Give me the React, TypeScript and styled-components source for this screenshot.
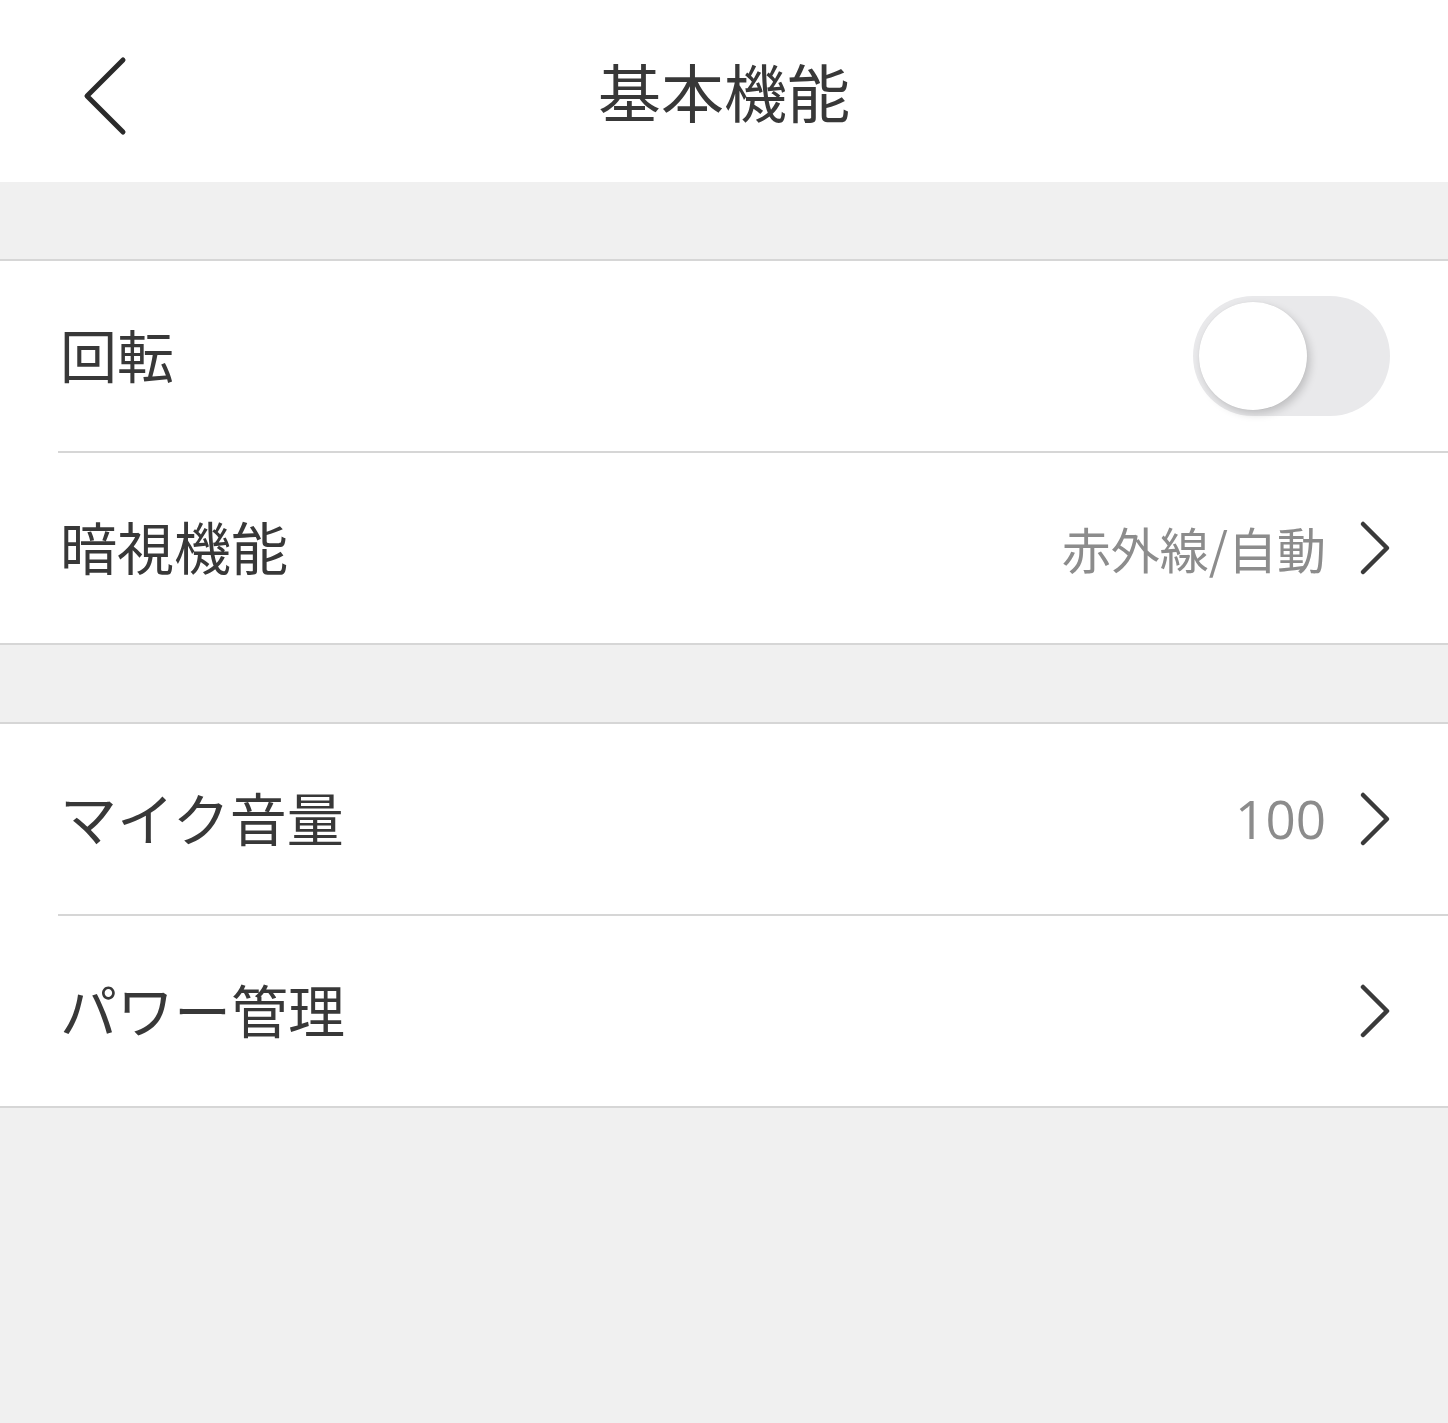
import React, { useState } from 'react';
import styled, { createGlobalStyle } from 'styled-components';

const GlobalStyle = createGlobalStyle`
  html, body {
    margin: 0;
    padding: 0;
    background: #f0f0f0;
  }
  body {
    font-family: "Noto Sans CJK JP", "Noto Sans", sans-serif;
    color: #333;
  }
`

const Page = styled.div`
  width: 1448px;
  min-height: 1423px;
  background: #f0f0f0;
`

const Header = styled.header`
  height: 182px;
  background: #fff;
  display: flex;
  align-items: center;
  justify-content: center;
  position: relative;
`

const BackButton = styled.button`
  position: absolute;
  left: 70px;
  top: 50px;
  width: 72px;
  height: 92px;
  border: none;
  background: none;
  padding: 0;
  display: flex;
  align-items: center;
  justify-content: center;
`

const Title = styled.h1`
  margin: 0 0 4px;
  font-size: 63px;
  font-weight: 400;
  color: #383838;
`

const Spacer = styled.div`
  height: 77px;
  border-bottom: 2px solid #d6d6d6;
`

const Group = styled.div`
  background: #fff;
  border-bottom: 2px solid #d6d6d6;
`

const Row = styled.div<{ $divider?: boolean }>`
  height: 190px;
  display: flex;
  align-items: center;
  padding: 0 56px 0 60px;
  position: relative;
  &::after {
    content: '';
    display: ${p => (p.$divider ? 'block' : 'none')};
    position: absolute;
    left: 58px;
    right: 0;
    bottom: -2px;
    height: 2px;
    background: #d6d6d6;
    z-index: 1;
  }
  & + & {
    margin-top: 2px;
  }
`

const Label = styled.span`
  flex: 1;
  font-size: 57px;
  color: #383838;
  padding-bottom: 6px;
`

const Value = styled.span`
  font-size: 49px;
  color: #8c8c8c;
  margin-right: 30px;
  padding-bottom: 2px;
`

const NumberValue = styled(Value)`
  font-family: "Open Sans", "Noto Sans", sans-serif;
  font-size: 53px;
`

const Track = styled.button<{ $on: boolean }>`
  width: 197px;
  height: 120px;
  margin-right: 2px;
  border-radius: 60px;
  border: none;
  padding: 0;
  background: ${p => (p.$on ? '#4cd964' : '#e9e9eb')};
  position: relative;
  cursor: pointer;
`

const Knob = styled.span<{ $on: boolean }>`
  position: absolute;
  top: 6px;
  left: ${p => (p.$on ? '83px' : '6px')};
  width: 108px;
  height: 108px;
  border-radius: 50%;
  background: #fff;
  box-shadow: 3px 4px 8px rgba(0, 0, 0, 0.18), 0 0 1px rgba(0, 0, 0, 0.1);
`

const Chevron = () => (
  <svg width="36" height="56" viewBox="0 0 36 56">
    <path d="M7 4 L31 28 L7 52" fill="none" stroke="#3a3a3a" strokeWidth="4.5" strokeLinecap="round" strokeLinejoin="round" />
  </svg>
)

const BackIcon = () => (
  <svg width="50" height="82" viewBox="0 0 50 82">
    <path d="M42 5 L6 41 L42 77" fill="none" stroke="#2a2a2a" strokeWidth="5" strokeLinecap="round" strokeLinejoin="round" />
  </svg>
)

export default function App() {
  const [rotate, setRotate] = useState(false)

  return (
    <Page>
      <GlobalStyle />
      <Header>
        <BackButton aria-label="戻る">
          <BackIcon />
        </BackButton>
        <Title>基本機能</Title>
      </Header>
      <Spacer />
      <Group>
        <Row $divider>
          <Label>回転</Label>
          <Track $on={rotate} onClick={() => setRotate(v => !v)}>
            <Knob $on={rotate} />
          </Track>
        </Row>
        <Row>
          <Label>暗視機能</Label>
          <Value>赤外線/自動</Value>
          <Chevron />
        </Row>
      </Group>
      <Spacer />
      <Group>
        <Row $divider>
          <Label>マイク音量</Label>
          <NumberValue>100</NumberValue>
          <Chevron />
        </Row>
        <Row>
          <Label>パワー管理</Label>
          <Chevron />
        </Row>
      </Group>
    </Page>
  )
}
